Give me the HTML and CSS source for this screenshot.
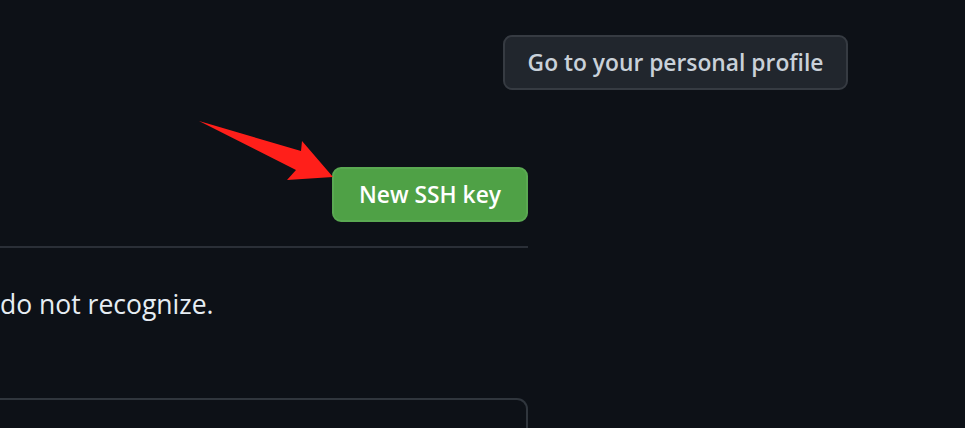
FILE: index.html
```html
<!DOCTYPE html>
<html lang="en">
<head>
<meta charset="utf-8">
<link rel="stylesheet" href="styles.css">
</head>
<body>
<div class="page">
  <div class="top">
    <button class="btn btn-default">Go to your personal profile</button>
  </div>
  <div class="main">
    <div class="actions">
      <button class="btn btn-primary">New SSH key</button>
    </div>
    <div class="divider"></div>
    <p class="note">do not recognize.</p>
    <div class="box"></div>
  </div>
  <svg class="arrow" width="140" height="65" viewBox="0 0 140 65">
    <polygon points="0,0 102,30 103,20 134,56 88,59 97,49" fill="#ff1f1a"/>
  </svg>
</div>
</body>
</html>
```
FILE: styles.css
```css
html, body {
  margin: 0;
  padding: 0;
  background: #0d1117;
  height: 100%;
  overflow: hidden;
}
.page {
  position: relative;
  padding-top: 35px;
  font-family: "Open Sans", "Noto Sans", sans-serif;
}
.top {
  width: 848px;
  display: flex;
  justify-content: flex-end;
}
.btn {
  box-sizing: border-box;
  height: 55px;
  border-radius: 9px;
  font-family: "Open Sans", "Noto Sans", sans-serif;
  font-size: 22.8px;
  font-weight: 600;
  padding: 0;
  cursor: pointer;
}
.btn-default {
  width: 345px;
  background: #21262d;
  border: 2px solid #363b42;
  color: #c9d1d9;
}
.btn-primary {
  width: 196px;
  background: #4fa146;
  border: 2px solid #5aa952;
  color: #ffffff;
}
.main {
  width: 528px;
  margin-top: 77px;
}
.actions {
  display: flex;
  justify-content: flex-end;
}
.divider {
  margin-top: 24px;
  height: 2px;
  background: #2a2f37;
}
.note {
  margin: 40px 0 0;
  font-size: 26.5px;
  line-height: 32px;
  color: #e6edf3;
}
.box {
  margin-top: 78px;
  height: 80px;
  border: 2px solid #30363d;
  border-left: none;
  border-radius: 0 11px 0 0;
}
.arrow {
  position: absolute;
  left: 199px;
  top: 121px;
}
```
